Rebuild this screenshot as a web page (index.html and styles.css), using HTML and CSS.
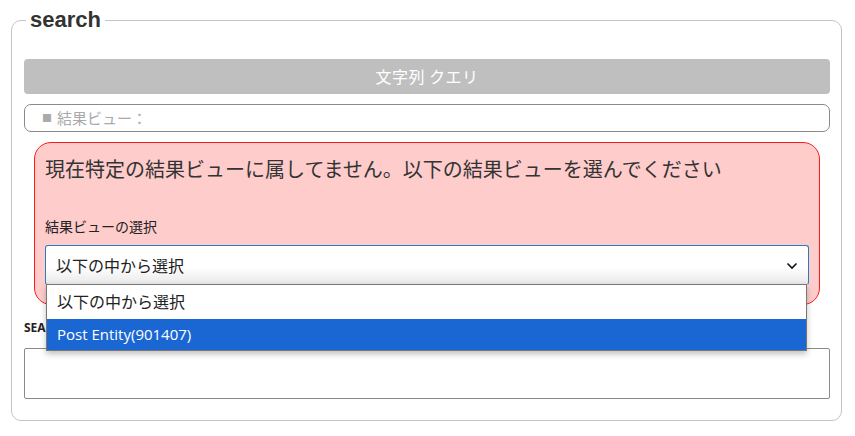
FILE: index.html
```html
<!DOCTYPE html>
<html lang="ja">
<head>
<meta charset="utf-8">
<title>search</title>
<link rel="stylesheet" href="styles.css">
</head>
<body>
<fieldset class="panel">
  <legend class="panel-title">search</legend>
  <div class="query-bar">文字列 クエリ</div>
  <div class="result-view"><span class="sq">■</span>結果ビュー：</div>
  <div class="alert">
    <p class="alert-msg">現在特定の結果ビューに属してません。以下の結果ビューを選んでください</p>
    <div class="field-label">結果ビューの選択</div>
    <div class="select-wrap">
      <div class="select">
        <span>以下の中から選択</span>
        <svg class="chev" width="12" height="8" viewBox="0 0 12 8"><polyline points="1.5,1.5 6,6 10.5,1.5" fill="none" stroke="#111" stroke-width="1.6"/></svg>
      </div>
      <ul class="options">
        <li class="opt">以下の中から選択</li>
        <li class="opt opt-active">Post Entity(901407)</li>
      </ul>
    </div>
  </div>
  <div class="search-label">SEARCH</div>
  <div class="textarea"></div>
</fieldset>
</body>
</html>
```
FILE: styles.css
```css
* { box-sizing: border-box; }
html, body { margin: 0; padding: 0; background: #fff; }
body {
  font-family: "Noto Sans CJK JP", "Noto Sans", sans-serif;
  color: #333;
  width: 855px;
  height: 436px;
  overflow: hidden;
}
.panel {
  margin: 8px 0 0 11px;
  width: 831px;
  height: 413px;
  border: 1px solid #c4c4c4;
  border-radius: 10px;
  padding: 27px 11px 0 12px;
}
.panel-title {
  font-family: "Liberation Sans", Arial, sans-serif;
  font-weight: bold;
  font-size: 22px;
  line-height: 24px;
  color: #333;
  padding: 0 4px;
  margin-left: 2px;
}
.query-bar {
  height: 35px;
  background: #bfbfbf;
  border-radius: 4px;
  color: #fff;
  font-size: 16px;
  letter-spacing: 0.5px;
  line-height: 35px;
  text-align: center;
}
.result-view {
  margin-top: 10px;
  height: 28px;
  border: 1px solid #8a8a8a;
  border-radius: 7px;
  padding-left: 17px;
  font-size: 15px;
  line-height: 26px;
  color: #aaa;
  display: flex;
  align-items: center;
}
.sq {
  font-size: 10px;
  margin-right: 5px;
}
.alert {
  margin: 10px 10px 0 10px;
  height: 163px;
  background: #ffcccc;
  border: 1px solid #ff1a1a;
  border-radius: 17px;
  padding: 10px 10px 0 10px;
}
.alert-msg {
  margin: 0;
  font-size: 20px;
  line-height: 31px;
  color: #333;
}
.field-label {
  margin-top: 32px;
  font-size: 14px;
  line-height: 20px;
  color: #222;
}
.select-wrap {
  position: relative;
  margin-top: 9px;
}
.select {
  height: 40px;
  border: 1px solid #2b7bbf;
  border-bottom-color: #bbb;
  border-radius: 3px;
  background: linear-gradient(#fff 55%, #e9e9e9);
  display: flex;
  align-items: center;
  justify-content: space-between;
  padding: 0 10px 0 10px;
  font-size: 16px;
  color: #222;
}
.chev { margin-top: 1px; }
.options {
  position: absolute;
  left: 1px;
  top: 39px;
  width: 761px;
  margin: 0;
  padding: 0;
  list-style: none;
  background: #fff;
  border: 1px solid #777;
  box-shadow: 0 3px 6px rgba(0,0,0,0.25);
  z-index: 2;
}
.opt {
  height: 34px;
  line-height: 32px;
  padding-left: 10px;
  font-size: 16px;
  color: #222;
}
.opt-active {
  height: 31px;
  line-height: 31px;
  background: #1a67d3;
  color: #fff;
  font-family: "Open Sans", "Noto Sans", sans-serif;
  font-size: 15px;
}
.search-label {
  margin-top: 14px;
  font-family: "Noto Sans", sans-serif;
  font-weight: bold;
  font-size: 12px;
  line-height: 18px;
  color: #222;
}
.textarea {
  margin-top: 11px;
  height: 51px;
  border: 1px solid #8a8a8a;
  border-radius: 2px;
}
```
